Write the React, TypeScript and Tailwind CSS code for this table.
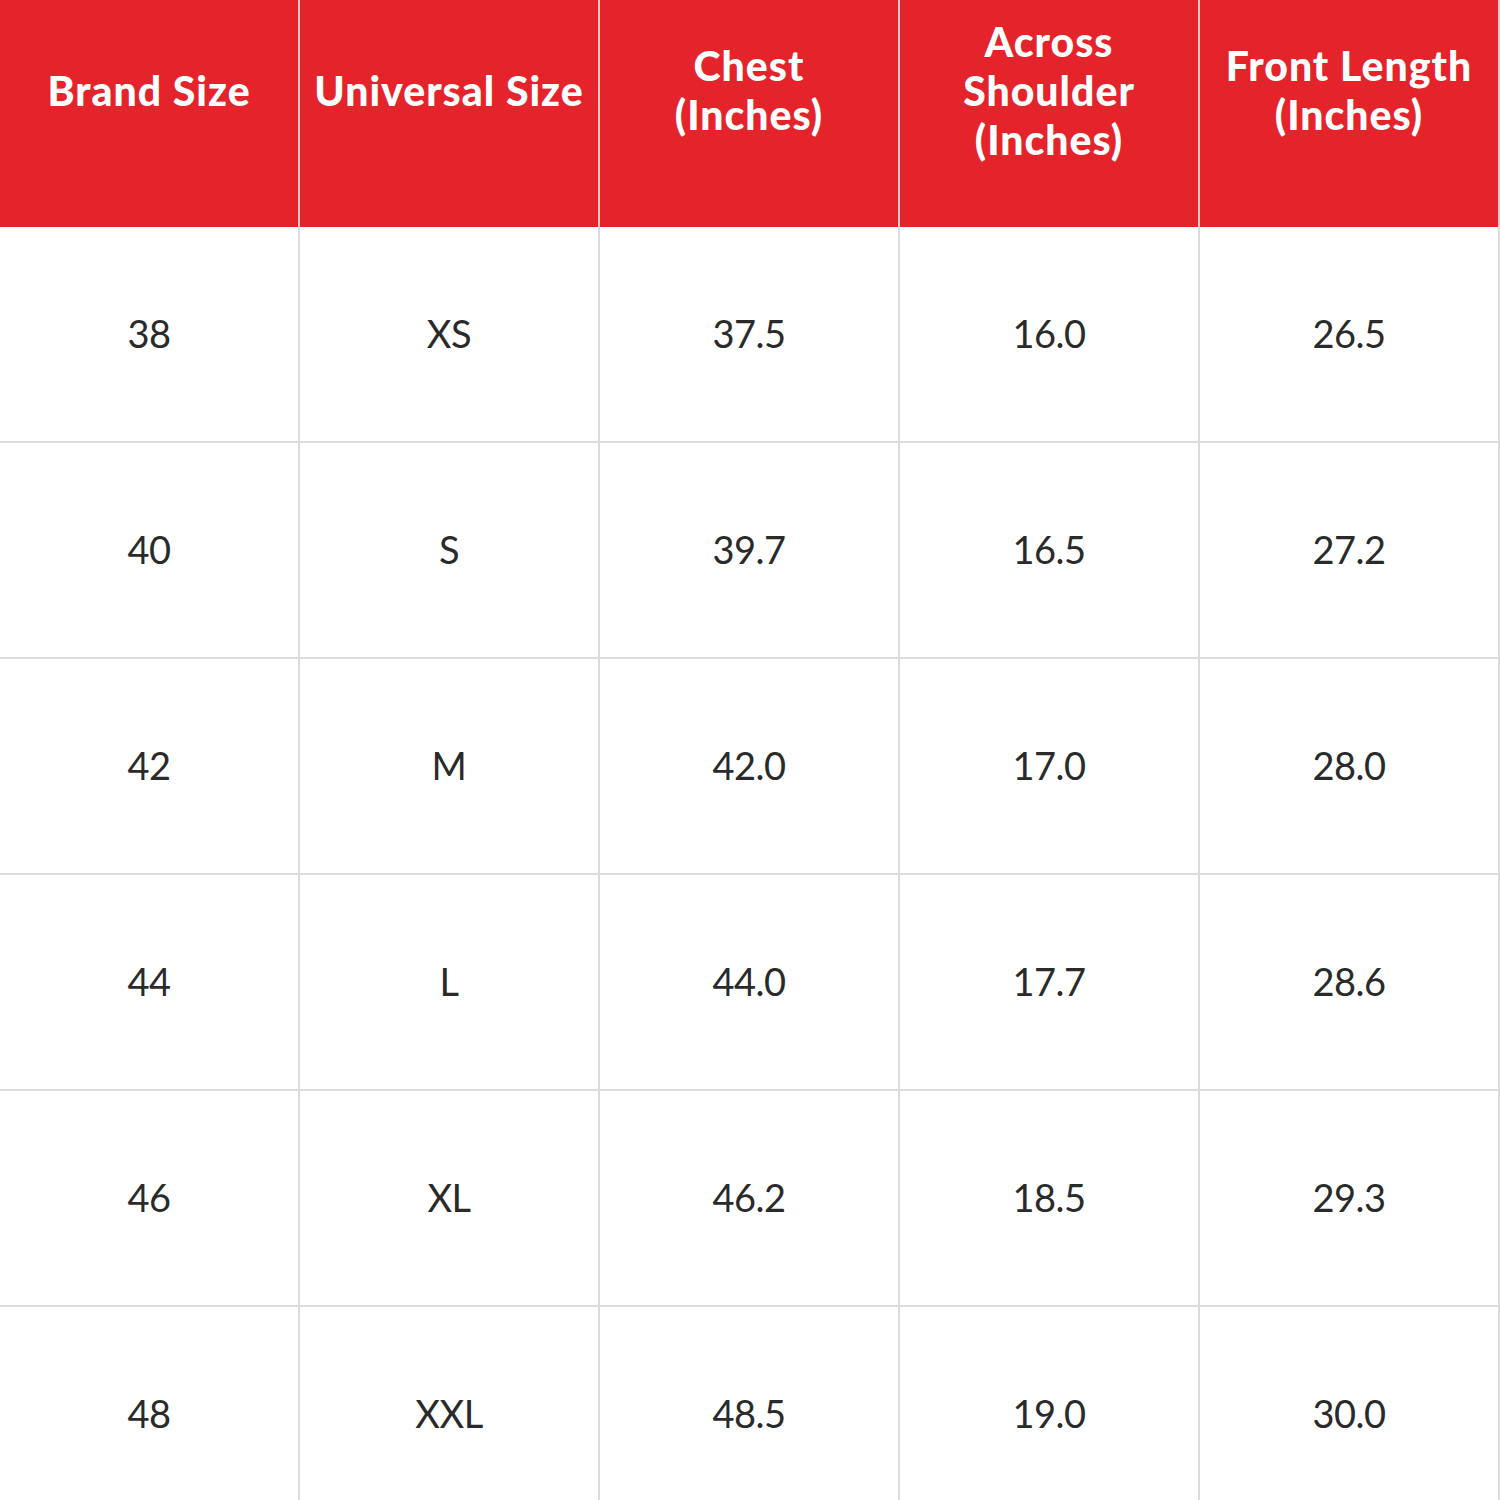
import React from "react";

const headers: string[][] = [
  ["Brand Size"],
  ["Universal Size"],
  ["Chest", "(Inches)"],
  ["Across", "Shoulder", "(Inches)"],
  ["Front Length", "(Inches)"],
];

const rows: string[][] = [
  ["38", "XS", "37.5", "16.0", "26.5"],
  ["40", "S", "39.7", "16.5", "27.2"],
  ["42", "M", "42.0", "17.0", "28.0"],
  ["44", "L", "44.0", "17.7", "28.6"],
  ["46", "XL", "46.2", "18.5", "29.3"],
  ["48", "XXL", "48.5", "19.0", "30.0"],
];

export default function App() {
  return (
    <div
      className="w-[1500px] h-[1500px] overflow-hidden bg-white"
      style={{ fontFamily: "Lato, 'Noto Sans', sans-serif" }}
    >
      <div className="grid grid-cols-5">
        {headers.map((h, i) => (
          <div
            key={i}
            className="h-[227px] bg-[#e5232b] border-r-2 border-[#f4c9cb] flex items-center justify-center pb-[47px] text-white font-black text-[41px] leading-[49px] text-center tracking-[1px]"
          >
            <div>
              {h.map((line, j) => (
                <div key={j}>{line}</div>
              ))}
            </div>
          </div>
        ))}
        {rows.map((r, ri) =>
          r.map((c, ci) => (
            <div
              key={`${ri}-${ci}`}
              className="h-[216px] border-r-2 border-b-2 border-[#dcdcdc] flex items-center justify-center pb-[2px] text-[38px] text-[#2a2a2a] tracking-[-0.5px]"
            >
              {c}
            </div>
          ))
        )}
      </div>
    </div>
  );
}
